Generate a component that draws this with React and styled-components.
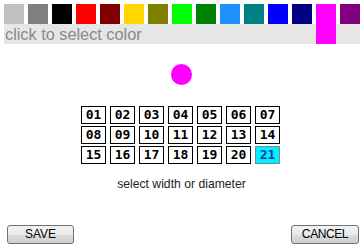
import React, { useState } from "react";
import styled, { createGlobalStyle } from "styled-components";

const GlobalStyle = createGlobalStyle`
  html, body {
    margin: 0;
    padding: 0;
    background: #ffffff;
  }
`;

const COLORS = [
  "#c0c0c0",
  "#808080",
  "#000000",
  "#ff0000",
  "#800000",
  "#ffd700",
  "#808000",
  "#00ff00",
  "#008000",
  "#1e90ff",
  "#008080",
  "#0000ff",
  "#000080",
  "#ff00ff",
  "#800080",
];

const Page = styled.div`
  display: flex;
  flex-direction: column;
  width: 364px;
  height: 248px;
  box-sizing: border-box;
  padding: 4px 5px 4px 4px;
  font-family: "Liberation Sans", Arial, sans-serif;
`;

const Palette = styled.div`
  display: grid;
  grid-template-columns: repeat(15, 20px);
  grid-template-rows: 20px 20px;
  column-gap: 4px;
`;

const Swatch = styled.div`
  grid-row: ${(p) => (p.$selected ? "1 / span 2" : "1")};
  z-index: ${(p) => (p.$selected ? 1 : 0)};
  background: ${(p) => p.$color};
  cursor: pointer;
`;

const Hint = styled.div`
  grid-row: 2;
  grid-column: 1 / -1;
  background: #e6e6e6;
  color: #8a8a8a;
  font-size: 16.3px;
  line-height: 20px;
  padding-left: 1px;
  white-space: nowrap;
`;

const Preview = styled.div`
  display: flex;
  align-items: center;
  justify-content: center;
  height: 60px;
`;

const Dot = styled.div`
  border-radius: 50%;
  background: ${(p) => p.$color};
`;

const Sizes = styled.div`
  display: grid;
  grid-template-columns: repeat(7, 25px);
  grid-auto-rows: 18px;
  column-gap: 4px;
  row-gap: 2px;
  justify-content: center;
  margin: 2px 2px 0 0;
`;

const SizeCell = styled.div`
  box-sizing: border-box;
  border: 1px solid ${(p) => (p.$selected ? "#7a8a8a" : "#000000")};
  background: ${(p) => (p.$selected ? "#00f0ff" : "#ffffff")};
  color: ${(p) => (p.$selected ? "#1a3aa8" : "#000000")};
  font-family: "DejaVu Sans Mono", "Liberation Mono", monospace;
  font-weight: bold;
  font-size: 13px;
  line-height: 16px;
  text-align: center;
  cursor: pointer;
`;

const Caption = styled.div`
  margin-top: 13px;
  text-align: center;
  font-size: 12.2px;
  line-height: 14px;
  color: #222222;
`;

const Actions = styled.div`
  display: flex;
  justify-content: space-between;
  margin-top: auto;
  padding-left: 3px;
`;

const Button = styled.button`
  box-sizing: border-box;
  width: ${(p) => p.$width}px;
  height: 19px;
  padding: 0;
  border: 1px solid #707070;
  border-radius: 3px;
  background: linear-gradient(#f2f2f2 0%, #ebebeb 50%, #dddddd 51%, #cfcfcf 100%);
  font-family: "Liberation Sans", Arial, sans-serif;
  font-size: 12px;
  line-height: 17px;
  color: #000000;
  letter-spacing: ${(p) => (p.$tight ? "-0.4px" : "0")};
`;

export default function App() {
  const [color, setColor] = useState("#ff00ff");
  const [size, setSize] = useState(21);

  return (
    <>
      <GlobalStyle />
      <Page>
        <Palette>
          {COLORS.map((c, i) => (
            <Swatch
              key={c}
              style={{ gridColumn: i + 1 }}
              $color={c}
              $selected={c === color}
              onClick={() => setColor(c)}
            />
          ))}
          <Hint>click to select color</Hint>
        </Palette>
        <Preview>
          <Dot $color={color} style={{ width: size, height: size }} />
        </Preview>
        <Sizes>
          {Array.from({ length: 21 }, (_, i) => i + 1).map((n) => (
            <SizeCell key={n} $selected={n === size} onClick={() => setSize(n)}>
              {String(n).padStart(2, "0")}
            </SizeCell>
          ))}
        </Sizes>
        <Caption>select width or diameter</Caption>
        <Actions>
          <Button $width={67}>SAVE</Button>
          <Button $width={68} $tight>
            CANCEL
          </Button>
        </Actions>
      </Page>
    </>
  );
}
